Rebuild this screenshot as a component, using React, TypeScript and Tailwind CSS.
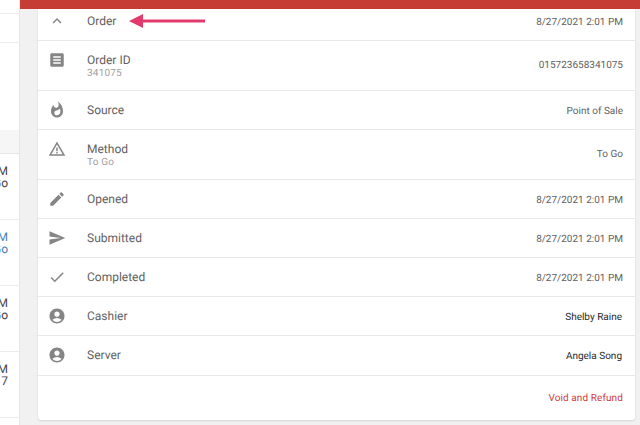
import React from "react";
import { MdExpandLess, MdWhatshot, MdWarningAmber, MdEdit, MdSend, MdCheck, MdAccountCircle } from "react-icons/md";

const ListIcon = ({ size = 18 }: { size?: number }) => (
  <svg width={size} height={size} viewBox="0 0 24 24" fill="currentColor">
    <path d="M19 3H5c-1.1 0-2 .9-2 2v14c0 1.1.9 2 2 2h14c1.1 0 2-.9 2-2V5c0-1.1-.9-2-2-2zM17 17H7v-2h10v2zm0-4H7v-2h10v2zm0-4H7V7h10v2z" />
  </svg>
);

type R = { icon: React.ReactNode; label: string; sub?: string; value: string; h: string; dark?: boolean; cls?: string };

const rows: R[] = [
  { icon: <MdExpandLess size={18} />, label: "Order", value: "8/27/2021 2:01 PM", h: "h-[32px]", cls: "pb-[8px]" },
  { icon: <ListIcon />, label: "Order ID", sub: "341075", value: "015723658341075", h: "h-[50px]" },
  { icon: <MdWhatshot size={18} />, label: "Source", value: "Point of Sale", h: "h-[39px]" },
  { icon: <MdWarningAmber size={18} />, label: "Method", sub: "To Go", value: "To Go", h: "h-[50px]" },
  { icon: <MdEdit size={18} />, label: "Opened", value: "8/27/2021 2:01 PM", h: "h-[39px]" },
  { icon: <MdSend size={18} />, label: "Submitted", value: "8/27/2021 2:01 PM", h: "h-[39px]" },
  { icon: <MdCheck size={18} />, label: "Completed", value: "8/27/2021 2:01 PM", h: "h-[39px]" },
  { icon: <MdAccountCircle size={18} />, label: "Cashier", value: "Shelby Raine", h: "h-[39px]", dark: true },
  { icon: <MdAccountCircle size={18} />, label: "Server", value: "Angela Song", h: "h-[40px]", dark: true, cls: "pb-[1px]" },
];

const Side = ({ a, b, blue, h }: { a: string; b: string; blue?: boolean; h: string }) => (
  <div className={`${h} shrink-0 border-b border-[#ececec] bg-white pt-[11px] pr-[11px] flex flex-col items-end text-[12px] leading-[12px] ${blue ? "text-[#4a7fb8]" : "text-[#444]"}`}>
    <span>{a}</span>
    <span>{b}</span>
  </div>
);

export default function App() {
  return (
    <div className="w-[640px] h-[425px] overflow-hidden flex bg-[#f1f1f1] font-['Roboto',sans-serif] [text-rendering:geometricPrecision]">
      <div className="w-[20px] shrink-0 flex flex-col overflow-hidden border-r border-[#e6e6e6]">
        <div className="h-[14px] shrink-0 bg-white border-b border-[#ececec]" />
        <div className="h-[29px] shrink-0 bg-white border-b border-[#ececec]" />
        <div className="h-[87px] shrink-0 bg-white" />
        <div className="h-[24px] shrink-0 bg-[#f6f6f6] border-b border-[#e6e6e6]" />
        <Side a="M" b="Go" h="h-[66px]" />
        <Side a="M" b="Go" blue h="h-[66px]" />
        <Side a="M" b="Go" h="h-[66px]" />
        <Side a="M" b="17" h="h-[66px]" />
        <div className="flex-1 bg-white" />
      </div>
      <div className="flex-1 flex flex-col min-w-0">
        <div className="h-[9px] shrink-0 bg-[#c53d35]" />
        <div className="ml-[18px] mr-[5px] h-[411px] bg-white rounded-b-[3px] shadow-[0_1px_2px_rgba(0,0,0,0.12)] flex flex-col">
          {rows.map((r, i) => (
            <div key={r.label} className={`${r.h} ${r.cls ?? ""} shrink-0 flex items-center border-b border-[#e8e8e8] pl-[9px] pr-[12px] relative`}>
              <div className={`w-[20px] shrink-0 flex justify-center text-[#858585] ${r.sub ? "self-start mt-[10px]" : ""}`}>{r.icon}</div>
              <div className="ml-[20px] flex-1 flex flex-col justify-center">
                <span className="text-[12px] leading-[16px] text-[#5f5f5f]">{r.label}</span>
                {r.sub && <span className="text-[10px] leading-[12px] tracking-[0.2px] text-[#a0a0a0]">{r.sub}</span>}
              </div>
              <span className={`${r.sub ? "" : "pt-[3px]"} ${r.dark ? "text-[10px] mr-[1px] text-[#2a2a2a]" : "text-[10px] text-[#5f5f5f]"}`}>{r.value}</span>
              {i === 0 && (
                <svg className="absolute left-[91px] top-[3px]" width="78" height="18" viewBox="0 0 78 18">
                  <path d="M0 9 L14 2 L14 7.6 L76 7.6 L76 10.4 L14 10.4 L14 16 Z" fill="#e23a6d" />
                </svg>
              )}
            </div>
          ))}
          <div className="flex-1 flex items-center justify-end pr-[12px] text-[10px] tracking-[0.1px] text-[#d23c3c]">Void and Refund</div>
        </div>
      </div>
    </div>
  );
}
